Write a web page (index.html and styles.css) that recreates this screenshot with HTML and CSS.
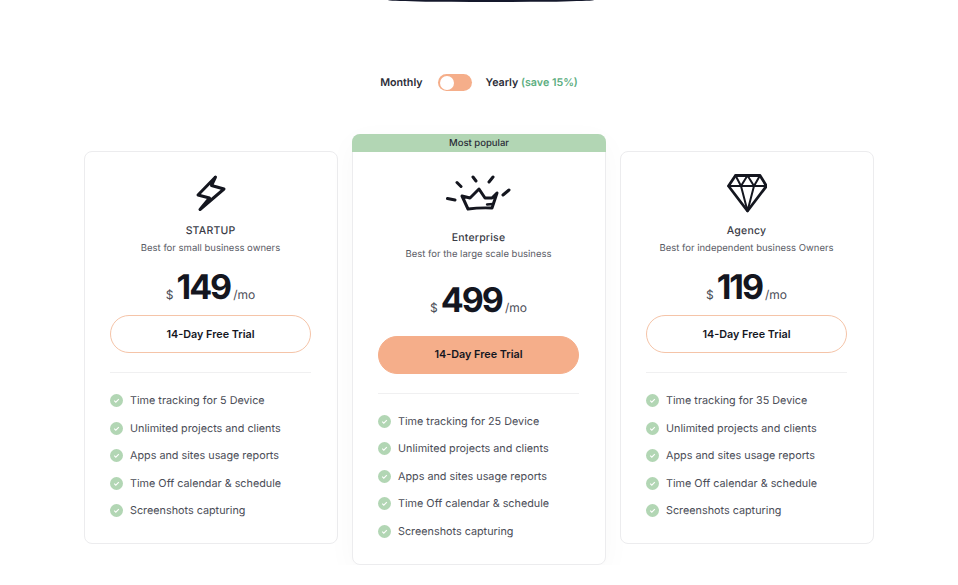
FILE: index.html
```html
<!DOCTYPE html>
<html lang="en">
<head>
    <meta charset="UTF-8">
    <title>Pricing</title>
    <link rel="stylesheet" href="styles.css">
</head>
<body>
    <div class="top-shape"></div>

    <section class="billing">
        <span class="billing-label billing-monthly">Monthly</span>
        <span class="switch"><span class="knob"></span></span>
        <span class="billing-label">Yearly <em class="save">(save 15%)</em></span>
    </section>

    <section class="plans">
        <div class="plan">
            <svg class="plan-icon" width="40" height="40" viewBox="0 0 40 40" fill="none" stroke="#14161f" stroke-width="3" stroke-linejoin="round" stroke-linecap="round">
                <path d="M24.5 3 L7 21 L18.5 24 L9 35.5 L33 15 L20.5 11.5 Z"/>
            </svg>
            <h3 class="plan-name">STARTUP</h3>
            <p class="plan-desc">Best for small business owners</p>
            <div class="price"><span class="currency">$</span><span class="amount">149</span><span class="per">/mo</span></div>
            <button class="trial">14-Day Free Trial</button>
            <hr class="divider">
            <ul class="features">
                <li><svg class="check" viewBox="0 0 13 13"><circle cx="6.5" cy="6.5" r="6.5" fill="#b2d6b4"/><path d="M4.2 6.7l1.6 1.5 3-3" fill="none" stroke="#fff" stroke-width="1.1"/></svg>Time tracking for 5 Device</li>
                <li><svg class="check" viewBox="0 0 13 13"><circle cx="6.5" cy="6.5" r="6.5" fill="#b2d6b4"/><path d="M4.2 6.7l1.6 1.5 3-3" fill="none" stroke="#fff" stroke-width="1.1"/></svg>Unlimited projects and clients</li>
                <li><svg class="check" viewBox="0 0 13 13"><circle cx="6.5" cy="6.5" r="6.5" fill="#b2d6b4"/><path d="M4.2 6.7l1.6 1.5 3-3" fill="none" stroke="#fff" stroke-width="1.1"/></svg>Apps and sites usage reports</li>
                <li><svg class="check" viewBox="0 0 13 13"><circle cx="6.5" cy="6.5" r="6.5" fill="#b2d6b4"/><path d="M4.2 6.7l1.6 1.5 3-3" fill="none" stroke="#fff" stroke-width="1.1"/></svg>Time Off calendar &amp; schedule</li>
                <li><svg class="check" viewBox="0 0 13 13"><circle cx="6.5" cy="6.5" r="6.5" fill="#b2d6b4"/><path d="M4.2 6.7l1.6 1.5 3-3" fill="none" stroke="#fff" stroke-width="1.1"/></svg>Screenshots capturing</li>
            </ul>
        </div>

        <div class="plan plan-popular">
            <div class="popular-tag">Most popular</div>
            <svg class="plan-icon" width="66" height="40" viewBox="0 0 66 40" fill="none" stroke="#14161f" stroke-linejoin="round" stroke-linecap="round">
                <path stroke-width="3" d="M16 22 L22 35 Q33 33.500 46 34 L51 19 L46 24 L39 24 L33 15 L24 24 Z"/>
                <path stroke-width="2.4" d="M41 30.500 L47 30"/>
                <path stroke-width="3" d="M1.500 24.500 L9 26 M11 8.500 L15 12.500 M27 3 L30 7 M47 3 L43 8 M63 16 L57 21"/>
            </svg>
            <h3 class="plan-name">Enterprise</h3>
            <p class="plan-desc">Best for the large scale business</p>
            <div class="price"><span class="currency">$</span><span class="amount">499</span><span class="per">/mo</span></div>
            <button class="trial trial-filled">14-Day Free Trial</button>
            <hr class="divider">
            <ul class="features">
                <li><svg class="check" viewBox="0 0 13 13"><circle cx="6.5" cy="6.5" r="6.5" fill="#b2d6b4"/><path d="M4.2 6.7l1.6 1.5 3-3" fill="none" stroke="#fff" stroke-width="1.1"/></svg>Time tracking for 25 Device</li>
                <li><svg class="check" viewBox="0 0 13 13"><circle cx="6.5" cy="6.5" r="6.5" fill="#b2d6b4"/><path d="M4.2 6.7l1.6 1.5 3-3" fill="none" stroke="#fff" stroke-width="1.1"/></svg>Unlimited projects and clients</li>
                <li><svg class="check" viewBox="0 0 13 13"><circle cx="6.5" cy="6.5" r="6.5" fill="#b2d6b4"/><path d="M4.2 6.7l1.6 1.5 3-3" fill="none" stroke="#fff" stroke-width="1.1"/></svg>Apps and sites usage reports</li>
                <li><svg class="check" viewBox="0 0 13 13"><circle cx="6.5" cy="6.5" r="6.5" fill="#b2d6b4"/><path d="M4.2 6.7l1.6 1.5 3-3" fill="none" stroke="#fff" stroke-width="1.1"/></svg>Time Off calendar &amp; schedule</li>
                <li><svg class="check" viewBox="0 0 13 13"><circle cx="6.5" cy="6.5" r="6.5" fill="#b2d6b4"/><path d="M4.2 6.7l1.6 1.5 3-3" fill="none" stroke="#fff" stroke-width="1.1"/></svg>Screenshots capturing</li>
            </ul>
        </div>

        <div class="plan">
            <svg class="plan-icon" width="40" height="40" viewBox="0 0 40 40" fill="none" stroke="#14161f" stroke-width="2.8" stroke-linejoin="round" stroke-linecap="round">
                <path d="M8.500 1.500 H33 L39.500 12 L20.500 37 L1.500 12 Z"/>
                <path stroke-width="2" d="M1.500 12 H39.500 M8.500 1.500 L14 12 L20.500 1.500 L27 12 L33 1.500 M14 12 L20.500 37 L27 12"/>
            </svg>
            <h3 class="plan-name">Agency</h3>
            <p class="plan-desc">Best for independent business Owners</p>
            <div class="price"><span class="currency">$</span><span class="amount">119</span><span class="per">/mo</span></div>
            <button class="trial">14-Day Free Trial</button>
            <hr class="divider">
            <ul class="features">
                <li><svg class="check" viewBox="0 0 13 13"><circle cx="6.5" cy="6.5" r="6.5" fill="#b2d6b4"/><path d="M4.2 6.7l1.6 1.5 3-3" fill="none" stroke="#fff" stroke-width="1.1"/></svg>Time tracking for 35 Device</li>
                <li><svg class="check" viewBox="0 0 13 13"><circle cx="6.5" cy="6.5" r="6.5" fill="#b2d6b4"/><path d="M4.2 6.7l1.6 1.5 3-3" fill="none" stroke="#fff" stroke-width="1.1"/></svg>Unlimited projects and clients</li>
                <li><svg class="check" viewBox="0 0 13 13"><circle cx="6.5" cy="6.5" r="6.5" fill="#b2d6b4"/><path d="M4.2 6.7l1.6 1.5 3-3" fill="none" stroke="#fff" stroke-width="1.1"/></svg>Apps and sites usage reports</li>
                <li><svg class="check" viewBox="0 0 13 13"><circle cx="6.5" cy="6.5" r="6.5" fill="#b2d6b4"/><path d="M4.2 6.7l1.6 1.5 3-3" fill="none" stroke="#fff" stroke-width="1.1"/></svg>Time Off calendar &amp; schedule</li>
                <li><svg class="check" viewBox="0 0 13 13"><circle cx="6.5" cy="6.5" r="6.5" fill="#b2d6b4"/><path d="M4.2 6.7l1.6 1.5 3-3" fill="none" stroke="#fff" stroke-width="1.1"/></svg>Screenshots capturing</li>
            </ul>
        </div>
    </section>
</body>
</html>
```

FILE: styles.css
```css
html, body {
    margin: 0;
    background: #fff;
    font-family: Inter, "Liberation Sans", sans-serif;
    color: #14161f;
    text-rendering: geometricPrecision;
    overflow: hidden;
}

.top-shape {
    width: 206px;
    height: 2px;
    margin-left: 388px;
    background: #14182b;
    border-radius: 0 0 50% 50% / 0 0 100% 100%;
}

/* billing switch */
.billing {
    display: flex;
    justify-content: center;
    align-items: center;
    gap: 14px;
    height: 17px;
    margin-top: 71px;
    padding: 1px 0 0;
}

.billing-label {
    font-size: 10.7px;
    font-weight: 600;
    color: #2b2d38;
}

.billing-monthly {
    margin-right: 1px;
}

.save {
    font-style: normal;
    color: #5dae7f;
}

.switch {
    display: flex;
    align-items: center;
    box-sizing: border-box;
    width: 34px;
    height: 17px;
    padding: 2px;
    background: #f5ae8a;
    border-radius: 9px;
}

.knob {
    width: 14px;
    height: 14px;
    background: #fff;
    border-radius: 50%;
}

/* plans */
.plans {
    display: flex;
    justify-content: center;
    align-items: flex-start;
    gap: 14px;
    margin-top: 60px;
}

.plan {
    box-sizing: border-box;
    width: 254px;
    height: 393px;
    padding: 22px 26px 0 25px;
    border: 1px solid #ececee;
    border-radius: 8px;
    text-align: center;
    background: #fff;
}

.plan-icon {
    display: block;
    margin: 0 auto;
}

.plan-name {
    margin: 9px 0 0;
    font-size: 10.5px;
    line-height: 16px;
    font-weight: 500;
    letter-spacing: .2px;
    color: #3a3c46;
}

.plan-desc {
    margin: 2.5px 0 0;
    font-size: 9.5px;
    line-height: 14px;
    color: #5a5c66;
}

.price {
    display: flex;
    justify-content: center;
    align-items: baseline;
    height: 44px;
    margin-top: 10px;
}

.currency {
    margin-right: 3px;
    font-size: 12px;
    color: #4b4d57;
}

.amount {
    font-size: 34px;
    line-height: 44px;
    font-weight: 700;
    letter-spacing: -2px;
}

.per {
    margin-left: 3px;
    font-size: 12px;
    color: #4b4d57;
}

.trial {
    display: block;
    width: 100%;
    height: 38px;
    margin-top: 5.5px;
    background: #fff;
    border: 1px solid #f5c4a8;
    border-radius: 19px;
    font-family: inherit;
    font-size: 10.8px;
    font-weight: 600;
    color: #14161f;
}

.trial-filled {
    background: #f5ae8a;
    border-color: #f5ae8a;
}

.divider {
    height: 1px;
    margin: 19px 0 0;
    border: 0;
    background: #f0f0f1;
}

.features {
    margin: 14px 0 0;
    padding: 0;
    list-style: none;
}

.features li {
    display: flex;
    align-items: center;
    gap: 7px;
    height: 27.5px;
    font-size: 10.8px;
    color: #4b4d57;
}

.check {
    flex: none;
    width: 13px;
    height: 13px;
}

/* middle plan sits higher and runs longer */
.plan-popular {
    height: 431px;
    margin-top: -17px;
    padding-top: 0;
    box-shadow: 0 8px 30px rgba(0, 0, 0, .03);
}

.popular-tag {
    height: 18px;
    margin: -1px -27px 22px -26px;
    background: #b2d6b4;
    border-radius: 8px 8px 0 0;
    font-size: 9.5px;
    line-height: 19px;
    font-weight: 500;
    color: #2b2d38;
}

.plan-popular .plan-name {
    margin-top: 15.5px;
}

.plan-popular .price {
    margin-top: 16.5px;
}

.plan-popular .trial {
    margin-top: 13px;
}
```
